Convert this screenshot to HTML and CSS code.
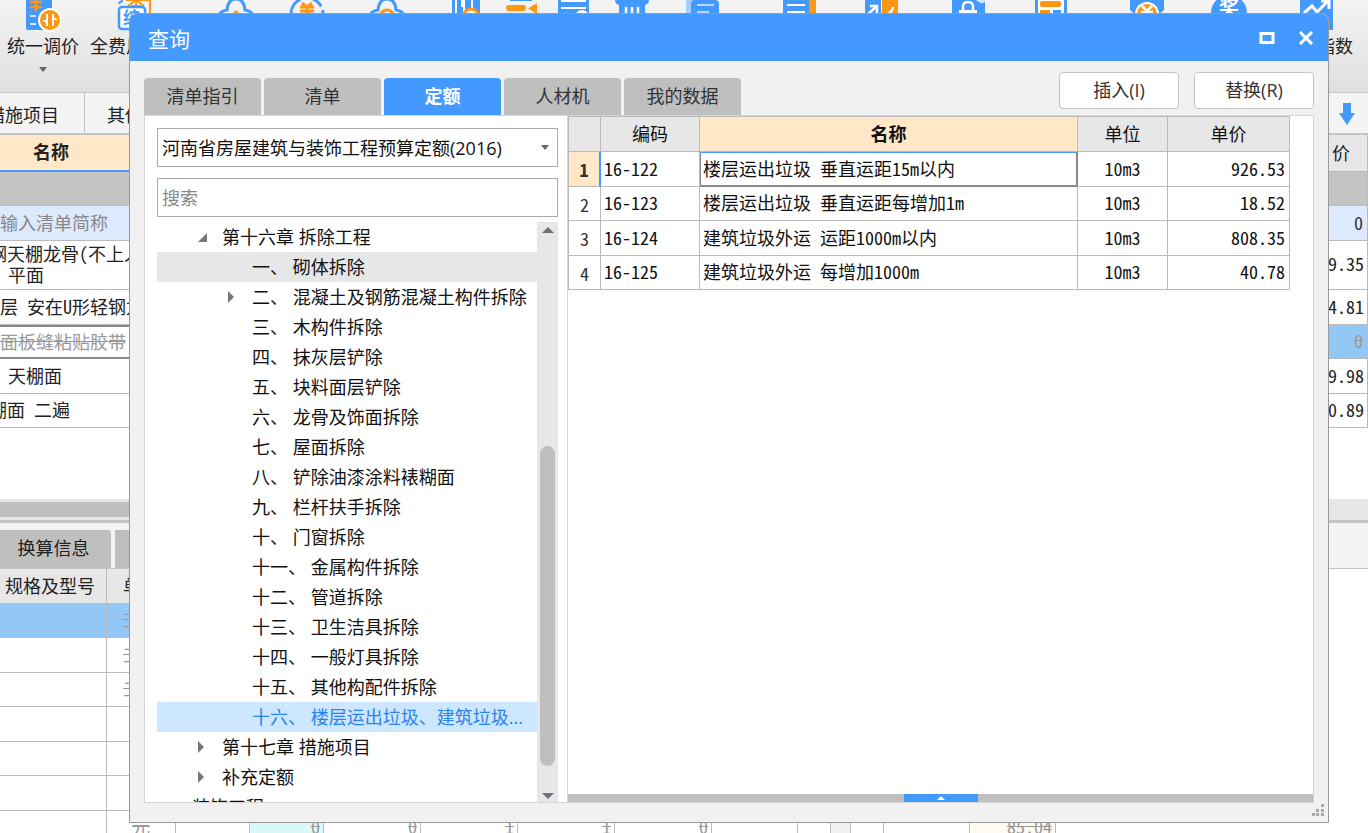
FILE: index.html
```
<!DOCTYPE html>
<html lang="zh-CN">
<head>
<meta charset="utf-8">
<title>查询</title>
<link rel="stylesheet" href="styles.css">
</head>
<body>
<div class="app">
  <header class="toolbar">
    <button class="tool">
      <svg width="36" height="32" viewBox="0 0 36 32"><path fill="#49f" d="M1 0h26v30H3q-2 0-2-2z"/><path stroke="#fff" stroke-width="1.5" d="M5 16h6M5 24h6"/><path stroke="#ff9614" stroke-width="2.5" d="M11 0v11M5 2h12M5 7h12"/><circle cx="25" cy="20" r="11" fill="#ff9614" stroke="#fff" stroke-width="2"/><path fill="#fff" d="M23 14v12h-2v-3l-4-3h4v-6zM27 26V14h2v3l4 3h-4v6z"/></svg>
      <span>统一调价</span>
      <i class="caret"></i>
    </button>
    <button class="tool tool-left">
      <svg width="36" height="32" viewBox="0 0 36 32"><path fill="none" stroke="#ff9614" stroke-width="2" d="M9 0h24v14M11 6l8-6 8 6M14 6h10M19 1v8"/><path fill="none" stroke="#49f" stroke-width="2" d="M2 4q1-3 4-3"/><rect x="2" y="7" width="26" height="22" rx="3" fill="#fff" stroke="#49f" stroke-width="2.5"/><text x="6" y="24" font-size="17" font-weight="700" fill="#49f">综</text></svg>
      <span>全费用</span>
    </button>
    <svg width="36" height="32" viewBox="0 0 36 32"><path fill="none" stroke="#49f" stroke-width="3" d="M1 15q2-4 8-5Q10-1 18-1t9 11q6 1 8 5"/><path fill="#ff9614" d="M18 10l6 6H12z"/></svg>
    <svg width="36" height="32" viewBox="0 0 36 32"><circle cx="18" cy="14" r="16" fill="none" stroke="#49f" stroke-width="3" stroke-dasharray="20 4"/><path fill="none" stroke="#ff9614" stroke-width="3" d="M13 3l5 4 5-4M11 7h14M11 11h14M18 7v10"/></svg>
    <svg width="36" height="32" viewBox="0 0 36 32"><path fill="none" stroke="#49f" stroke-width="3" d="M1 15q2-4 8-5Q10-1 18-1t9 11q6 1 8 5"/><circle cx="18" cy="17" r="7" fill="none" stroke="#ff9614" stroke-width="3"/></svg>
    <svg width="36" height="32" viewBox="0 0 36 32"><path fill="#49f" d="M0 0h28v16H0z"/><path stroke="#fff" stroke-width="2" d="M4 0v14M10 0v7M20 0v7"/><path fill="#fff" d="M11 0h2v12h-2zM19 0h2v8h-2z"/><circle cx="19" cy="17" r="8" fill="#fff" stroke="#ff9614" stroke-width="3"/></svg>
    <svg width="36" height="32" viewBox="0 0 36 32"><path fill="#49f" d="M7 0h22v1H7z"/><rect x="3" y="5" width="20" height="6" rx="3" fill="#ff9614"/><path fill="#ff9614" d="M34 3v11l-9-5.500z"/></svg>
    <svg width="36" height="32" viewBox="0 0 36 32"><path fill="#49f" d="M3 0h31v16H3z"/><path stroke="#fff" stroke-width="2" d="M6 1h25M6 8h25"/><circle cx="27" cy="17" r="7" fill="#fff"/></svg>
    <svg width="36" height="32" viewBox="0 0 36 32"><path fill="#49f" d="M1 0h34q0 4-4 5v12H5V5Q1 4 1 0z"/><path stroke="#fff" stroke-width="2.500" d="M12 7v9M18 7v9M24 7v9"/></svg>
    <svg width="36" height="32" viewBox="0 0 36 32"><path fill="#9fceff" d="M1 0h12v16H1z"/><path fill="#49f" d="M6 16V4q0-4 4-4h20q4 0 4 4v12z"/><path stroke="#b5d9ff" stroke-width="2" d="M12 5h17M12 12h12"/></svg>
    <svg width="36" height="32" viewBox="0 0 36 32"><path fill="#ff9614" d="M25 0h9v16h-9z"/><path fill="#49f" d="M1 0h26v16H1z"/><path stroke="#fff" stroke-width="2" d="M5 5h18M5 12h18"/></svg>
    <svg width="36" height="32" viewBox="0 0 36 32"><path fill="#49f" d="M1 0h16v16H1z"/><path fill="#ff9614" d="M18 0h16v16H18z"/><path fill="none" stroke="#fff" stroke-width="2.500" d="M4 14l8-7M6 6h7v7M29 7q-1 5-5 7"/></svg>
    <svg width="36" height="32" viewBox="0 0 36 32"><path fill="#49f" d="M2 0h33v16H2z"/><path fill="#cfe6ff" d="M26 0h9v2q-4 3-9-2z"/><path fill="none" stroke="#fff" stroke-width="2.500" d="M13 10V7q0-5 5-5t5 5v3"/><path fill="#fff" d="M9 10h18v6H9z"/></svg>
    <svg width="36" height="32" viewBox="0 0 36 32"><path fill="#49f" d="M2 0h32v16H2z"/><path fill="#fff" d="M5 0h26v16H5z"/><rect x="7" y="1" width="21" height="6" rx="2" fill="#ff9614"/><path fill="#ff9614" d="M7 10h10v6H7z"/><path fill="#49f" d="M20 10h8v6h-8z"/></svg>
    <svg width="36" height="32" viewBox="0 0 36 32"><path fill="#49f" d="M1 0h34v10l-6 5H7l-6-5z"/><circle cx="18" cy="14" r="11" fill="#ff9614" stroke="#fff" stroke-width="2"/><path fill="none" stroke="#fff" stroke-width="2.500" d="M13 6l5 5 5-5M12 12h12M18 11v7"/></svg>
    <svg width="36" height="32" viewBox="0 0 36 32"><circle cx="18" cy="13" r="18" fill="#49f"/><text x="8" y="15" font-size="20" font-weight="700" fill="#fff">奖</text></svg>
    <button class="tool tool-right">
      <svg width="36" height="32" viewBox="0 0 36 32"><path fill="#49f" d="M1 0h33v30H1z"/><path fill="none" stroke="#fff" stroke-width="3" d="M5 13l8-7 5 6L30 0M22 1h8v8"/></svg>
      <span>指数</span>
    </button>
  </header>

  <nav class="sheet-tabs">
    <button class="sheet-tab first">措施项目</button>
    <button class="sheet-tab">其他项目</button>
    <svg class="down" width="18" height="24" viewBox="0 0 18 24"><path fill="#49f" d="M5 1h8v10h4L9 23 1 11h4z"/></svg>
  </nav>

  <table class="bill">
    <colgroup><col class="c-name"><col><col class="c-price"></colgroup>
    <tr class="head"><th class="hot">名称</th><th></th><th class="plain">价</th></tr>
    <tr class="group"><td></td><td></td><td></td></tr>
    <tr class="entry"><td>输入清单简称</td><td></td><td class="num">0</td></tr>
    <tr class="tall"><td><div class="clip">钢天棚龙骨(不上人</div><div class="pad">平面</div></td><td></td><td class="num">9.35</td></tr>
    <tr><td>层 安在U形轻钢龙</td><td></td><td class="num">4.81</td></tr>
    <tr class="current"><td><s>面板缝粘贴胶带</s></td><td></td><td class="num"><s>0</s></td></tr>
    <tr><td class="pad">天棚面</td><td></td><td class="num">9.98</td></tr>
    <tr><td><div class="clip">棚面 二遍</div></td><td></td><td class="num">0.89</td></tr>
  </table>
  <div class="hscroll"><div class="hthumb"></div></div>

  <section class="detail">
    <nav class="detail-tabs"><button>换算信息</button><button></button></nav>
    <table class="resources">
      <colgroup><col class="w107"><col class="w69"><col class="w74"><col class="w74"><col class="w97"><col class="w97"><col class="w97"><col class="w97"><col class="w86"><col class="w33"><col class="w20"><col class="w33"><col class="w86"><col class="w86"><col></colgroup>
      <tr class="head"><th>规格及型号</th><th>单位</th><th colspan="12"></th><td></td></tr>
      <tr class="picked"><td></td><td><s>工日</s></td><td colspan="12"></td><td></td></tr>
      <tr><td></td><td><s>工日</s></td><td colspan="12"></td><td></td></tr>
      <tr><td></td><td><s>工日</s></td><td colspan="12"></td><td></td></tr>
      <tr><td></td><td></td><td colspan="12"></td><td></td></tr>
      <tr><td></td><td></td><td colspan="12"></td><td></td></tr>
      <tr><td></td><td></td><td colspan="12"></td><td></td></tr>
      <tr><td></td><td><s>元</s></td><td></td><td class="num cyan"><s>0</s></td><td class="num"><s>0</s></td><td class="num"><s>1</s></td><td class="num"><s>1</s></td><td class="num"><s>0</s></td><td></td><td></td><td class="shade"></td><td></td><td></td><td class="num cream"><s>85.04</s></td><td></td></tr>
    </table>
  </section>
</div>

<div class="dialog" role="dialog" aria-labelledby="dlg-title">
  <div class="titlebar">
    <h1 id="dlg-title">查询</h1>
    <button aria-label="最大化"><svg width="16" height="14" viewBox="0 0 16 14"><path fill="none" stroke="#fff" stroke-width="3" d="M2 2.500h12v9H2z"/></svg></button>
    <button aria-label="关闭"><svg width="16" height="14" viewBox="0 0 16 14"><path stroke="#fff" stroke-width="3" d="M2 1l12 12M14 1L2 13"/></svg></button>
  </div>
  <div class="actions">
    <div class="tabs" role="tablist">
      <button role="tab">清单指引</button>
      <button role="tab">清单</button>
      <button role="tab" class="active" aria-selected="true">定额</button>
      <button role="tab">人材机</button>
      <button role="tab">我的数据</button>
    </div>
    <button class="btn">插入(I)</button>
    <button class="btn">替换(R)</button>
  </div>
  <div class="content">
    <aside class="library">
      <div class="picker">
        <select aria-label="定额库"><option>河南省房屋建筑与装饰工程预算定额(2016)</option></select>
        <i class="caret"></i>
      </div>
      <input class="search" type="text" placeholder="搜索" aria-label="搜索">
      <div class="tree-box">
        <ul class="tree">
          <li class="l2"><i class="open"></i>第十六章 拆除工程</li>
          <li class="l3 hover"><i></i>一、 砌体拆除</li>
          <li class="l3"><i class="shut"></i>二、 混凝土及钢筋混凝土构件拆除</li>
          <li class="l3"><i></i>三、 木构件拆除</li>
          <li class="l3"><i></i>四、 抹灰层铲除</li>
          <li class="l3"><i></i>五、 块料面层铲除</li>
          <li class="l3"><i></i>六、 龙骨及饰面拆除</li>
          <li class="l3"><i></i>七、 屋面拆除</li>
          <li class="l3"><i></i>八、 铲除油漆涂料裱糊面</li>
          <li class="l3"><i></i>九、 栏杆扶手拆除</li>
          <li class="l3"><i></i>十、 门窗拆除</li>
          <li class="l3"><i></i>十一、 金属构件拆除</li>
          <li class="l3"><i></i>十二、 管道拆除</li>
          <li class="l3"><i></i>十三、 卫生洁具拆除</li>
          <li class="l3"><i></i>十四、 一般灯具拆除</li>
          <li class="l3"><i></i>十五、 其他构配件拆除</li>
          <li class="l3 selected"><i></i>十六、 楼层运出垃圾、建筑垃圾...</li>
          <li class="l2"><i class="shut"></i>第十七章 措施项目</li>
          <li class="l2"><i class="shut"></i>补充定额</li>
          <li class="l1"><i></i>装饰工程</li>
        </ul>
        <div class="vscroll"><i class="up"></i><div class="vthumb"></div><i class="dn"></i></div>
      </div>
    </aside>
    <main class="result">
      <table class="quota">
        <colgroup><col class="q-no"><col class="q-code"><col class="q-name"><col class="q-unit"><col class="q-price"></colgroup>
        <thead><tr><th></th><th>编码</th><th class="hot">名称</th><th>单位</th><th>单价</th></tr></thead>
        <tbody>
          <tr class="on"><td>1</td><td>16-122</td><td class="focus">楼层运出垃圾 垂直运距15m以内</td><td>10m3</td><td>926.53</td></tr>
          <tr><td>2</td><td>16-123</td><td>楼层运出垃圾 垂直运距每增加1m</td><td>10m3</td><td>18.52</td></tr>
          <tr><td>3</td><td>16-124</td><td>建筑垃圾外运 运距1000m以内</td><td>10m3</td><td>808.35</td></tr>
          <tr><td>4</td><td>16-125</td><td>建筑垃圾外运 每增加1000m</td><td>10m3</td><td>40.78</td></tr>
        </tbody>
      </table>
      <div class="splitter"><button aria-label="展开"><i></i></button></div>
    </main>
  </div>
  <svg class="grip" width="12" height="12" viewBox="0 0 12 12"><path fill="#aaa" d="M9 0h3v3H9zM9 5h3v3H9zM4 5h3v3H4zM9 9h3v3H9zM4 9h3v3H4zM0 9h3v3H0z"/></svg>
</div>
</body>
</html>
```
FILE: styles.css
```
* { box-sizing: border-box; }
body {
  margin: 0;
  height: 100vh;
  overflow: hidden;
  position: relative;
  font-family: "Open Sans", "Noto Sans CJK SC", sans-serif;
  font-size: 18px;
  line-height: 24px;
  color: #222;
  background: #fff;
}
button, select, input { font: inherit; color: inherit; margin: 0; padding: 0; border: 0; background: none; }
svg { display: block; flex: none; }
ul { list-style: none; margin: 0; padding: 0; }
table { border-collapse: separate; border-spacing: 0; table-layout: fixed; font-family: "Noto Sans CJK SC", sans-serif; font-feature-settings: "hwid"; }
th, td { padding: 0 0 3px; font-weight: 400; white-space: nowrap; overflow: hidden; }

.app { height: 100vh; display: flex; flex-direction: column; overflow: hidden; }

/* ribbon */
.toolbar {
  flex: none;
  height: 93px;
  display: grid;
  grid-template-columns: 86px 132px 71px 80px 83px 51px 52px 59px 71px 97px 82px 86px 83px 96px 82px 70px 1fr;
  align-items: start;
  background: linear-gradient(#f4f4f4, #dfdfdf);
  border-bottom: 1px solid #c4c4c4;
}
.tool { display: flex; flex-direction: column; align-items: center; gap: 2px; }
.tool .caret { margin-top: 7px; }
.tool-left { align-items: flex-start; padding-left: 4px; }
.tool-left svg { margin-left: 27px; }
.tool-right { justify-self: end; width: 72px; margin-right: 15px; }
.tool-right span { align-self: flex-end; }
.caret { width: 0; height: 0; border: 4px solid transparent; border-top: 5px solid #666; border-bottom: 0; }

/* worksheet tabs */
.sheet-tabs { flex: none; height: 42px; display: flex; align-items: stretch; background: #f4f4f4; border-bottom: 2px solid #c4c4c4; }
.sheet-tab { width: 110px; padding: 4px 0 0 22px; text-align: left; }
.sheet-tab.first { width: 85px; padding: 4px 25px 0 0; display: flex; justify-content: flex-end; align-items: center; white-space: nowrap; overflow: hidden; border-right: 1px solid #c4c4c4; }
.down { margin: 9px 12px 0 auto; }

/* bill table */
.bill { flex: none; width: 100%; }
.bill tr { height: 34px; }
.bill tr:nth-child(odd) { height: 35px; }
.bill td, .bill th { border-bottom: 1px solid #bbb; }
.bill tr > :last-child { border-right: 1px solid #bbb; }
.c-name { width: 130px; }
.c-price { width: 40px; }
.bill .hot { padding-right: 28px; font-weight: 700; background: #ffe7c8; border-bottom: 2px solid #49f; }
.bill tr.head { height: 37px; }
.bill .plain { padding-left: 4px; text-align: left; background: #e7e7e7; }
.bill .group td { background: #c4c4c4; }
.bill .entry td { background: #dde9fd; color: #888; }
.bill .entry .num { color: #333; }
.bill tr.tall { height: 49px; }
.tall td { line-height: 21px; }
.clip { display: flex; justify-content: flex-start; width: 150px; text-indent: -11px; }
.pad { padding-left: 8px; }
.bill .current td { border-top: 2px solid #888; border-bottom: 2px solid #888; color: #999; }
.bill .current .num { background: #93c7f6; border-top: 0; border-bottom: 1px solid #bbb; }
td.num { text-align: right; padding-right: 4px; }
.hscroll { flex: none; margin-top: 71px; height: 24px; padding-top: 3px; background: #e7e7e7; border-bottom: 3px solid #c4c4c4; }
.hthumb { width: 200px; height: 15px; background: #bfbfbf; }

/* detail panel */
.detail { flex: 1; min-height: 0; overflow: hidden; }
.detail-tabs { height: 46px; padding-top: 7px; display: flex; gap: 4px; background: #f4f4f4; border-bottom: 1px solid #c4c4c4; }
.detail-tabs button { width: 111px; padding: 0 4px 2px 0; background: #bfbfbf; border-radius: 0 3px 0 0; }
.resources { width: 100%; }
.resources tr { height: 35px; }
.resources tr:nth-child(even) { height: 34px; }
.resources td, .resources th { border-right: 1px solid #bbb; border-bottom: 1px solid #bbb; text-align: center; }
.resources tr > :last-child { border: 0; }
.resources .head th { background: #e7e7e7; }
.resources .head th:first-child { padding-right: 6px; }
.resources .picked td { background: #93c7f6; }
.resources .picked td:last-child { background: #fff; }
.resources td { color: #999; }
.resources td.num { text-align: right; padding-right: 3px; }
.resources .cyan { background: #dbf8f8; }
.resources .cream { background: #fffaf4; }
.resources .shade { background: #f1f1f1; }
.w107 { width: 107px; } .w69 { width: 69px; } .w74 { width: 74px; } .w97 { width: 97px; }
.w86 { width: 86px; } .w33 { width: 33px; } .w20 { width: 20px; }

/* query dialog */
.dialog {
  position: absolute;
  inset: 13px 39px 10px 129px;
  display: flex;
  flex-direction: column;
  background: #f1f1f1;
  border: 1px solid #999;
  border-radius: 7px 7px 0 0;
  overflow: hidden;
  color: #111;
}
.titlebar { flex: none; height: 47px; display: flex; align-items: center; gap: 23px; padding: 0 14px 0 18px; background: #49f; color: #fff; }
.titlebar h1 { flex: 1; margin: 0; padding-top: 2px; font-size: 21px; font-weight: 400; }
.actions { flex: none; height: 54px; display: flex; align-items: center; gap: 15px; padding: 4px 14px 0; }
.tabs { flex: 1; align-self: flex-end; display: flex; gap: 3px; }
.tabs button { width: 117px; height: 37px; padding-bottom: 2px; background: #bfbfbf; border-radius: 4px 4px 0 0; color: #333; }
.tabs .active { background: #49f; color: #fff; font-weight: 700; }
.btn { width: 120px; height: 37px; padding-bottom: 1px; background: #fff; border: 1px solid #c4c4c4; border-radius: 4px; color: #333; }
.content { flex: 1; min-height: 0; margin: 0 14px 19px; display: flex; background: #fff; border: 1px solid #d4d4d4; }

.library { flex: none; width: 423px; padding: 12px 9px 0 12px; display: flex; flex-direction: column; border-right: 1px solid #d4d4d4; }
.picker { flex: none; display: flex; align-items: center; height: 39px; margin-bottom: 11px; padding-right: 8px; border: 1px solid #aaa; }
.picker select { flex: 1; height: 37px; padding-left: 4px; appearance: none; }
.search { flex: none; height: 39px; margin-bottom: 5px; padding-left: 4px; border: 1px solid #aaa; }
.search::placeholder { color: #888; opacity: 1; }
.tree-box { flex: 1; min-height: 0; display: flex; }
.tree { flex: 1; overflow: hidden; }
.tree li { height: 30px; line-height: 30px; display: flex; align-items: center; white-space: nowrap; }
.tree i { flex: none; width: 24px; height: 12px; }
.l1 { padding-left: 11px; }
.l2 { padding-left: 41px; }
.l3 { padding-left: 71px; }
.tree .hover { background: #e7e7e7; }
.tree .selected { background: #cce7ff; color: #2a83ea; }
.open::before, .shut::before { content: ""; display: block; width: 0; height: 0; }
.shut::before { border: 6px solid transparent; border-left: 6px solid #777; border-right: 0; }
.open::before { border-left: 9px solid transparent; border-bottom: 9px solid #777; margin-top: 2px; }
.vscroll { flex: none; width: 21px; padding: 5px 0 3px; display: flex; flex-direction: column; align-items: center; background: #e7e7e7; }
.vthumb { width: 15px; height: 320px; margin: auto 0 27px; border-radius: 8px; background: #bfbfbf; }
.up, .dn { border: 6px solid transparent; }
.up { border-top: 0; border-bottom: 6px solid #70707c; }
.dn { border-bottom: 0; border-top: 6px solid #70707c; }

.result { flex: 1; min-width: 0; display: flex; flex-direction: column; }
.quota { width: 722px; border-top: 1px solid #bbb; border-left: 1px solid #bbb; }
.quota tr { height: 35px; }
.quota tbody tr:nth-child(even) { height: 34px; }
.quota th, .quota td { border-right: 1px solid #bbb; border-bottom: 1px solid #bbb; text-align: center; }
.quota th { background: #e7e7e7; }
.quota .hot { background: #ffe7c8; font-weight: 700; }
.quota td:nth-child(2), .quota td:nth-child(3) { text-align: left; padding-left: 3px; }
.quota td:nth-child(5) { text-align: right; padding-right: 4px; }
.quota td:first-child { padding-bottom: 0; color: #333; }
.quota .on td:first-child { background: #ffe7c8; border-right: 2px solid #49f; font-weight: 700; }
.quota .on .focus { border-top: 1px solid #49f; border-right: 2px solid #888; border-bottom: 2px solid #888; box-shadow: inset 1px 0 #888; }
.q-no { width: 32px; } .q-code { width: 99px; } .q-name { width: 378px; } .q-unit { width: 90px; } .q-price { width: 122px; }
.splitter { margin-top: auto; height: 8px; display: flex; justify-content: center; background: #bfbfbf; }
.splitter button { width: 74px; display: flex; justify-content: center; align-items: center; background: #49f; }
.splitter i { border: 4px solid transparent; border-top: 0; border-bottom: 4px solid #fff; }
.grip { position: absolute; right: 4px; bottom: 6px; }
```
